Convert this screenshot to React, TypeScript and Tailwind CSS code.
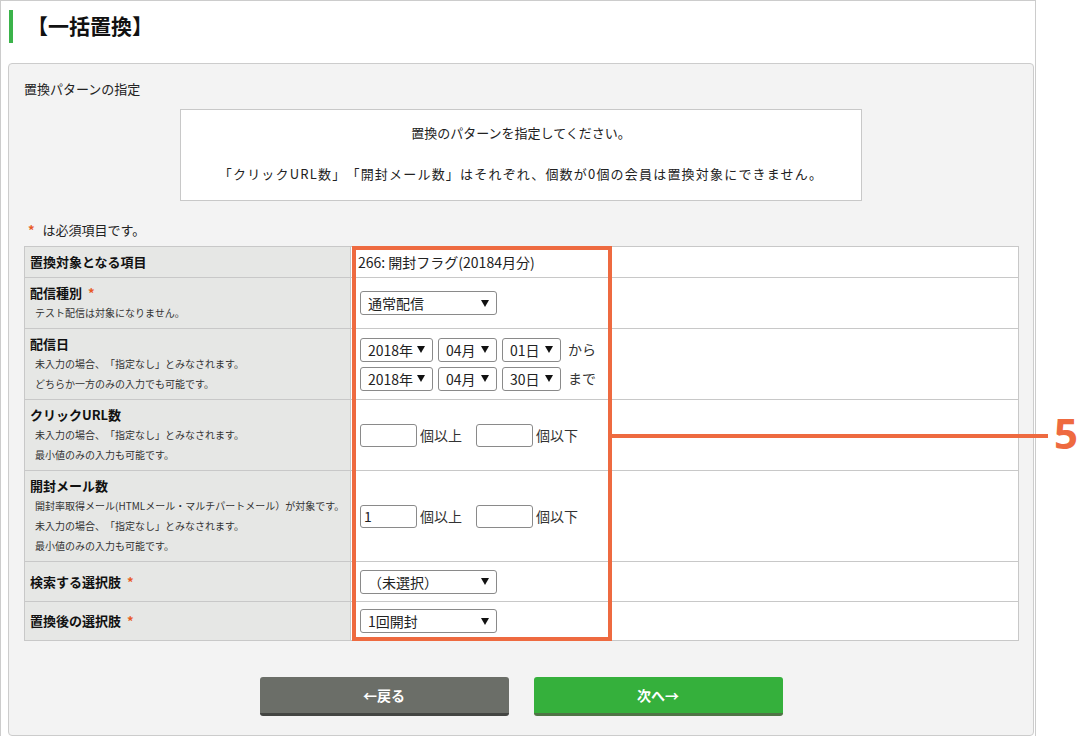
import React from "react";

const JP = "font-['Noto_Sans_CJK_JP','Noto_Sans',sans-serif] [text-spacing-trim:space-all]";

function Arrow() {
  return (
    <svg width="8" height="7" viewBox="0 0 8 7" className="shrink-0">
      <polygon points="0,0 8,0 4,7" fill="#111" />
    </svg>
  );
}

function FakeSelect({ value, width }: { value: string; width: string }) {
  return (
    <div
      className={`flex h-[24px] items-center justify-between rounded-[3px] border border-[#8a8a8a] bg-white pl-[7px] pr-[7px] text-[14px] text-[#222] ${width}`}
    >
      <span className="leading-none">{value}</span>
      <Arrow />
    </div>
  );
}

function FakeInput({ value = "" }: { value?: string }) {
  return (
    <div className="flex h-[23px] w-[57px] items-center rounded-[3px] border border-[#8a8a8a] bg-white pl-[3px] text-[14px] text-[#222]">
      {value}
    </div>
  );
}

function Req() {
  return <span className="ml-[6px] font-bold text-[#e85a24]">*</span>;
}

interface RowProps {
  title: React.ReactNode;
  notes?: string[];
  height: string;
  last?: boolean;
  children: React.ReactNode;
}

function Row({ title, notes = [], height, last, children }: RowProps) {
  return (
    <div className={`flex ${height} ${last ? "" : "border-b border-[#c8c8c8]"}`}>
      <div className="flex w-[326px] flex-col justify-center border-r border-[#c8c8c8] bg-[#e6e7e5] pl-[5px]">
        <div className="text-[13px] font-bold leading-[20px] text-[#111]">{title}</div>
        {notes.map((n) => (
          <div key={n} className="pl-[5px] text-[10px] leading-[20px] text-[#333]">
            {n}
          </div>
        ))}
      </div>
      <div className="flex flex-1 items-center bg-white pl-[9px]">{children}</div>
    </div>
  );
}

function CountInputs({ first = "" }: { first?: string }) {
  return (
    <div className="flex items-center text-[14px] text-[#333]">
      <FakeInput value={first} />
      <span className="ml-[3px] w-[56px]">個以上</span>
      <FakeInput />
      <span className="ml-[3px]">個以下</span>
    </div>
  );
}

export default function App() {
  return (
    <div className={`relative h-[736px] w-[1091px] overflow-hidden bg-white ${JP}`}>
      <div className="h-[760px] w-[1036px] border-l border-r border-t border-[#cccccc] bg-white">
        {/* Title */}
        <div className="mt-[9px] flex h-[33px] items-center pl-[8px]">
          <div className="h-[33px] w-[4px] bg-[#3bb34a]" />
          <h1 className="ml-[14px] pb-[3px] text-[21px] font-bold leading-none text-[#111]">【一括置換】</h1>
        </div>

        {/* Panel */}
        <div className="ml-[7px] mt-[20px] h-[673px] w-[1026px] rounded-[4px] border border-[#cccccc] bg-[#f3f3f3] pl-[15px] pt-[15px]">
          <div className="text-[13px] leading-[20px] text-[#222]">置換パターンの指定</div>

          <div className="ml-[156px] mt-[10px] flex h-[92px] w-[682px] flex-col items-center border border-[#c8c8c8] bg-white pt-[13px] text-[13px] leading-[20px] text-[#222]">
            <div>置換のパターンを指定してください。</div>
            <div className="mt-[21px] tracking-[1.2px]">
              「クリックURL数」「開封メール数」はそれぞれ、個数が0個の会員は置換対象にできません。
            </div>
          </div>

          <div className="ml-[4px] mt-[19px] text-[13px] leading-[20px] text-[#222]">
            <span className="mr-[8px] font-bold text-[#e85a24]">*</span>は必須項目です。
          </div>

          {/* Form table */}
          <div className="mt-[6px] w-[995px] border border-[#c8c8c8]">
            <Row title="置換対象となる項目" height="h-[31px]">
              <span className="-ml-[2px] text-[14px] text-[#222]">266: 開封フラグ(20184月分)</span>
            </Row>
            <Row title={<>配信種別<Req /></>} notes={["テスト配信は対象になりません。"]} height="h-[51px]">
              <FakeSelect value="通常配信" width="w-[137px]" />
            </Row>
            <Row
              title="配信日"
              notes={["未入力の場合、「指定なし」とみなされます。", "どちらか一方のみの入力でも可能です。"]}
              height="h-[71px]"
            >
              <div className="flex flex-col gap-[5px]">
                {[
                  ["01日", "から"],
                  ["30日", "まで"],
                ].map(([day, word]) => (
                  <div key={day} className="flex items-center gap-[5px]">
                    <FakeSelect value="2018年" width="w-[73px]" />
                    <FakeSelect value="04月" width="w-[59px]" />
                    <FakeSelect value={day} width="w-[59px]" />
                    <span className="ml-[2px] text-[14px] text-[#333]">{word}</span>
                  </div>
                ))}
              </div>
            </Row>
            <Row
              title="クリックURL数"
              notes={["未入力の場合、「指定なし」とみなされます。", "最小値のみの入力も可能です。"]}
              height="h-[71px]"
            >
              <CountInputs />
            </Row>
            <Row
              title="開封メール数"
              notes={[
                "開封率取得メール(HTMLメール・マルチパートメール）が対象です。",
                "未入力の場合、「指定なし」とみなされます。",
                "最小値のみの入力も可能です。",
              ]}
              height="h-[91px]"
            >
              <CountInputs first="1" />
            </Row>
            <Row title={<>検索する選択肢<Req /></>} height="h-[40px]">
              <FakeSelect value="（未選択）" width="w-[137px]" />
            </Row>
            <Row title={<>置換後の選択肢<Req /></>} height="h-[38px]" last>
              <FakeSelect value="1回開封" width="w-[137px]" />
            </Row>
          </div>

          {/* Buttons */}
          <div className="mt-[36px] flex w-[995px] justify-center gap-[25px] pr-[1px]">
            <button className="h-[39px] w-[249px] rounded-[3px] border-b-[3px] border-[#434542] bg-[#6b6e68] text-[14px] font-bold text-white">
              ←戻る
            </button>
            <button className="h-[39px] w-[249px] rounded-[3px] border-b-[3px] border-[#4f7446] bg-[#35b03c] text-[14px] font-bold text-white">
              次へ→
            </button>
          </div>
        </div>
      </div>

      {/* Annotation overlay */}
      <div className="absolute left-[352px] top-[246px] h-[395px] w-[260px] border-[4px] border-[#ee6a40]" />
      <div className="absolute left-[611px] top-[434px] h-[4px] w-[437px] bg-[#ee6a40]" />
      <div className="absolute left-[1054px] top-[405px] font-['Noto_Sans',sans-serif] text-[42px] font-bold leading-[56px] text-[#ee6a40]">
        5
      </div>
    </div>
  );
}
